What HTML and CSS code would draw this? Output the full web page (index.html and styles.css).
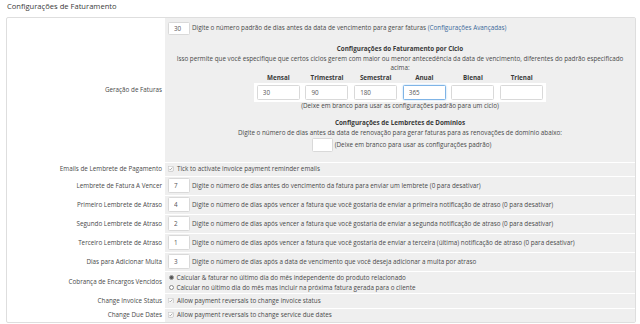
FILE: index.html
```html
<!DOCTYPE html>
<html lang="pt">
<head>
<meta charset="utf-8">
<title>Configurações de Faturamento</title>
<link rel="stylesheet" href="styles.css">
</head>
<body>
<h1 class="title">Configurações de Faturamento</h1>
<div class="form">
  <div class="label">Geração de Faturas</div>
  <div class="field field-gen">
    <div class="inline">
      <input class="num n-first" type="text" value="30">
      <span>Digite o número padrão de dias antes da data de vencimento para gerar faturas <a class="link" href="#">(Configurações Avançadas)</a></span>
    </div>
    <div class="section">
      <div class="bold">Configurações do Faturamento por Ciclo</div>
      <div class="nowrap">Isso permite que você especifique que certos ciclos gerem com maior ou menor antecedência da data de vencimento, diferentes do padrão especificado<br>acima:</div>
      <div class="cycles">
        <div class="ch">Mensal</div>
        <div class="ch">Trimestral</div>
        <div class="ch">Semestral</div>
        <div class="ch">Anual</div>
        <div class="ch">Bienal</div>
        <div class="ch">Trienal</div>
        <div class="ci"><input class="cyc" type="text" value="30"></div>
        <div class="ci"><input class="cyc" type="text" value="90"></div>
        <div class="ci"><input class="cyc" type="text" value="180"></div>
        <div class="ci"><input class="cyc focus" type="text" value="365"></div>
        <div class="ci"><input class="cyc" type="text" value=""></div>
        <div class="ci"><input class="cyc" type="text" value=""></div>
      </div>
      <div class="note">(Deixe em branco para usar as configurações padrão para um ciclo)</div>
      <div class="bold sub">Configurações de Lembretes de Domínios</div>
      <div>Digite o número de dias antes da data de renovação para gerar faturas para as renovações de domínio abaixo:</div>
      <div class="domline">
        <input class="dom" type="text" value="">
        <span>(Deixe em branco para usar as configurações padrão)</span>
      </div>
    </div>
  </div>

  <div class="label">Emails de Lembrete de Pagamento</div>
  <div class="field inline">
    <svg class="cb" viewBox="0 0 12 12"><rect x="0.5" y="0.5" width="11" height="11" rx="1.5" fill="#fff" stroke="#9a9a9a"/><path d="M2.8 6.2 L5.1 8.5 L9.3 3.6" fill="none" stroke="#777" stroke-width="1.3"/></svg>
    <span>Tick to activate invoice payment reminder emails</span>
  </div>

  <div class="label">Lembrete de Fatura A Vencer</div>
  <div class="field inline">
    <input class="num" type="text" value="7">
    <span>Digite o número de dias antes do vencimento da fatura para enviar um lembrete (0 para desativar)</span>
  </div>

  <div class="label">Primeiro Lembrete de Atraso</div>
  <div class="field inline">
    <input class="num" type="text" value="4">
    <span>Digite o número de dias após vencer a fatura que você gostaria de enviar a primeira notificação de atraso (0 para desativar)</span>
  </div>

  <div class="label">Segundo Lembrete de Atraso</div>
  <div class="field inline">
    <input class="num" type="text" value="2">
    <span>Digite o número de dias após vencer a fatura que você gostaria de enviar a segunda notificação de atraso (0 para desativar)</span>
  </div>

  <div class="label">Terceiro Lembrete de Atraso</div>
  <div class="field inline">
    <input class="num" type="text" value="1">
    <span>Digite o número de dias após vencer a fatura que você gostaria de enviar a terceira (última) notificação de atraso (0 para desativar)</span>
  </div>

  <div class="label">Dias para Adicionar Multa</div>
  <div class="field inline">
    <input class="num" type="text" value="3">
    <span>Digite o número de dias após a data de vencimento que você deseja adicionar a multa por atraso</span>
  </div>

  <div class="label">Cobrança de Encargos Vencidos</div>
  <div class="field radios">
    <div class="inline"><span class="radio checked"></span><span>Calcular &amp; faturar no último dia do mês independente do produto relacionado</span></div>
    <div class="inline"><span class="radio"></span><span>Calcular no último dia do mês mas incluir na próxima fatura gerada para o cliente</span></div>
  </div>

  <div class="label">Change Invoice Status</div>
  <div class="field inline">
    <svg class="cb" viewBox="0 0 12 12"><rect x="0.5" y="0.5" width="11" height="11" rx="1.5" fill="#fff" stroke="#9a9a9a"/><path d="M2.8 6.2 L5.1 8.5 L9.3 3.6" fill="none" stroke="#777" stroke-width="1.3"/></svg>
    <span>Allow payment reversals to change invoice status</span>
  </div>

  <div class="label">Change Due Dates</div>
  <div class="field inline">
    <svg class="cb" viewBox="0 0 12 12"><rect x="0.5" y="0.5" width="11" height="11" rx="1.5" fill="#fff" stroke="#9a9a9a"/><path d="M2.8 6.2 L5.1 8.5 L9.3 3.6" fill="none" stroke="#777" stroke-width="1.3"/></svg>
    <span>Allow payment reversals to change service due dates</span>
  </div>
</div>
</body>
</html>
```

FILE: styles.css
```css
* { box-sizing: border-box; }

html, body {
  margin: 0;
  padding: 0;
  background: #fff;
}

body {
  font-family: "Open Sans", "DejaVu Sans", sans-serif;
  font-size: 6.3px;
  line-height: 9.5px;
  color: #4a4a4a;
  width: 640px;
  height: 324px;
  overflow: hidden;
}

.title {
  margin: 0;
  padding: 0 7px;
  height: 12px;
  line-height: 12px;
  font-size: 7.6px;
  font-weight: normal;
  color: #3a3a3a;
  margin-bottom: 4.5px;
}

.form {
  margin-left: 6px;
  width: 630px;
  border: 1px solid #dedede;
  border-radius: 2px;
  background: #fff;
  display: grid;
  grid-template-columns: 157px 470px;
  grid-template-rows: 144px 13px 18px 18px 18px 18px 18px 21px 14px 13px;
  column-gap: 1px;
  row-gap: 1px;
}

.label {
  display: flex;
  align-items: center;
  justify-content: flex-end;
  text-align: right;
  padding-right: 2px;
  white-space: nowrap;
}

.field {
  background: #efefef;
  padding: 0 3px;
  white-space: nowrap;
}

.inline {
  display: flex;
  align-items: center;
  gap: 2px;
}

.field.inline {
  gap: 2px;
}

.field-gen {
  padding-top: 4px;
}

.link {
  color: #3b6a9a;
  text-decoration: none;
}

input {
  font-family: "Open Sans", "DejaVu Sans", sans-serif;
  font-size: 6.3px;
  color: #555;
  background: #fff;
  border: 1px solid #d9d9d9;
  border-radius: 1.5px;
  margin: 0;
  padding: 0 0 0 5px;
  outline: none;
}

.num {
  width: 22px;
  height: 15px;
}

.num.n-first {
  height: 13px;
}

.section {
  margin-top: 9.5px;
  text-align: center;
}

.bold {
  font-weight: bold;
  color: #3a3a3a;
}

.nowrap {
  white-space: nowrap;
}

.cycles {
  width: 292px;
  margin: 0 auto;
  display: grid;
  grid-template-columns: repeat(6, 1fr);
  grid-template-rows: 10.5px 18.5px;
}

.ch {
  font-weight: bold;
  color: #3a3a3a;
  line-height: 9.5px;
}

.ci {
  background: #fff;
  display: flex;
  align-items: center;
  justify-content: center;
}

.cyc {
  width: 43px;
  height: 15px;
}

.cyc.focus {
  border-color: #7fb4e6;
  box-shadow: 0 0 2px rgba(102, 175, 233, 0.6);
}

.note {
  line-height: 8.5px;
}

.sub {
  margin-top: 8px;
}

.domline {
  margin-top: 1px;
  display: flex;
  justify-content: center;
  align-items: center;
  gap: 2px;
  padding-left: 3px;
}

.dom {
  width: 21px;
  height: 14px;
}

.cb {
  width: 5.5px;
  height: 5.5px;
  margin-right: 1.5px;
  flex: none;
}

.radios {
  padding-top: 1px;
}

.radios .inline {
  height: 10px;
  gap: 2.5px;
}

.radio {
  width: 5.5px;
  height: 5.5px;
  border-radius: 50%;
  border: 0.7px solid #888;
  background: #fff;
  flex: none;
  margin-left: 0.5px;
}

.radio.checked {
  background: radial-gradient(circle, #555 0 1.4px, #fff 1.7px);
}
```
